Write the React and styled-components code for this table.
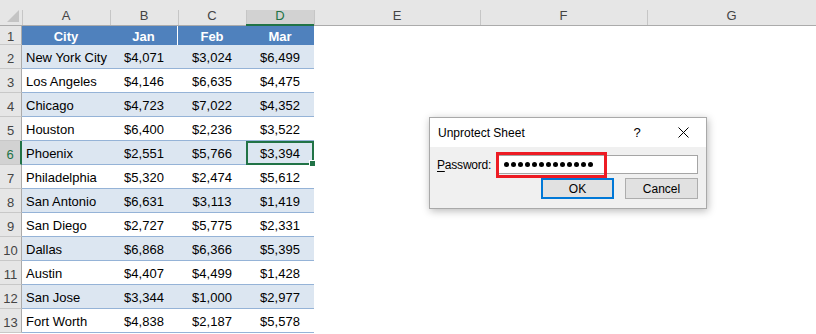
import React from 'react'
import styled, { createGlobalStyle, css } from 'styled-components'

const GlobalStyle = createGlobalStyle`
  html, body {
    margin: 0;
    padding: 0;
    background: #ffffff;
  }

  body {
    font-family: "Liberation Sans", Arial, sans-serif;
  }
`

const Page = styled.div`
  position: relative;
  width: 816px;
  height: 334px;
  overflow: hidden;
`

const Sheet = styled.div`
  display: grid;
  grid-template-columns: 22px 88px 68px 68px 68px 166px 167px 169px;
  grid-template-rows: 26px 19px repeat(12, 24px);
`

const Corner = styled.div`
  position: relative;
  background: #e6e6e6;
  border-bottom: 1px solid #ababab;
  box-sizing: border-box;

  &::after {
    content: '';
    position: absolute;
    right: 3px;
    bottom: 3px;
    width: 0;
    height: 0;
    border-left: 12px solid transparent;
    border-bottom: 12px solid #c4c4c4;
  }
`

const ColHead = styled.div`
  position: relative;
  display: flex;
  align-items: flex-end;
  justify-content: center;
  padding-bottom: 1px;
  box-sizing: border-box;

  font-size: 13px;
  line-height: 16px;
  color: #444444;

  background: #e6e6e6;
  border-bottom: 1px solid #ababab;

  &::before {
    content: '';
    position: absolute;
    left: 0;
    top: 10px;
    bottom: 0;
    width: 1px;
    background: #c6c6c6;
  }

  ${({ $active }) => $active && css`
    background: #d2d2d2;
    color: #217346;
    border-bottom: 2px solid #217346;
    padding-bottom: 0;

    &::after {
      content: '';
      position: absolute;
      left: 0;
      right: 0;
      top: 0;
      height: 10px;
      background: #e6e6e6;
    }
  `}
`

const RowHead = styled.div`
  display: flex;
  align-items: center;
  justify-content: center;
  padding-top: 3px;
  box-sizing: border-box;

  font-size: 13px;
  color: #444444;

  background: #e6e6e6;
  border-right: 1px solid #ababab;
  border-bottom: 1px solid #c8c8c8;

  ${({ $active }) => $active && css`
    background: #d2d2d2;
    color: #217346;
    border-right: 2px solid #217346;
  `}
`

const Cell = styled.div`
  position: relative;
  display: flex;
  align-items: center;
  justify-content: ${({ $left }) => ($left ? 'flex-start' : 'center')};
  padding: 2px 4px 0;
  box-sizing: border-box;

  font-size: 13px;
  color: #000000;
  white-space: nowrap;

  background: ${({ $band }) => ($band ? '#dce6f1' : '#ffffff')};
  border-bottom: 1px solid #95b3d7;

  ${({ $selected }) => $selected && css`
    border: 2px solid #217346;
    padding-top: 1px;

    &::after {
      content: '';
      position: absolute;
      right: -4px;
      bottom: -4px;
      width: 5px;
      height: 5px;
      background: #217346;
      border: 1px solid #ffffff;
      z-index: 2;
    }
  `}
`

const HeadCell = styled.div`
  display: flex;
  align-items: center;
  justify-content: center;
  padding-top: 1px;
  box-sizing: border-box;

  font-size: 13px;
  font-weight: 700;
  color: #ffffff;

  background: #4f81bd;
  border-right: ${({ $divider }) => ($divider ? '1px solid #ffffff' : 'none')};
`

const Blank = styled.div`
  background: #ffffff;
`

/* Unprotect dialog */

const Dialog = styled.div`
  position: absolute;
  left: 429px;
  top: 117px;
  width: 278px;
  height: 92px;
  box-sizing: border-box;

  display: flex;
  flex-direction: column;

  font-family: "Liberation Sans", Arial, sans-serif;
  font-size: 12px;
  color: #000000;

  background: #f0f0f0;
  border: 1px solid #a9a9a9;
  box-shadow: 1px 2px 8px rgba(0, 0, 0, 0.28);
`

const TitleBar = styled.div`
  display: flex;
  align-items: center;
  height: 29px;
  padding: 0 0 0 8px;
  background: #ffffff;
`

const Title = styled.span`
  flex: 1;
  padding-top: 1px;
`

const TitleButton = styled.span`
  display: flex;
  align-items: center;
  justify-content: center;
  width: 46px;
  height: 29px;
  font-size: 13px;
`

const Body = styled.div`
  display: flex;
  flex-direction: column;
  gap: 4px;
  padding: 8px 8px 0 7px;
`

const FieldRow = styled.div`
  display: flex;
  align-items: center;
  gap: 7px;
`

const Label = styled.span`
  width: 53px;
  letter-spacing: -0.2px;
  u {
    text-decoration: underline;
    text-underline-offset: 2px;
  }
`

const InputWrap = styled.div`
  position: relative;
  flex: 1;
  height: 19px;
  box-sizing: border-box;
  display: flex;
  align-items: center;
  gap: 2px;
  padding-left: 6px;

  background: #ffffff;
  border: 1px solid #a5a5a5;
`

const Dot = styled.span`
  width: 5px;
  height: 5px;
  border-radius: 50%;
  background: #000000;
`

const Highlight = styled.span`
  position: absolute;
  left: -2px;
  top: -4px;
  width: 111px;
  height: 26px;
  box-sizing: border-box;
  border: 3px solid #ed1c24;
`

const Buttons = styled.div`
  display: flex;
  justify-content: flex-end;
  gap: 11px;
`

const Button = styled.button`
  width: 73px;
  height: 21px;
  padding: 0;
  box-sizing: border-box;

  font-family: inherit;
  font-size: 12px;
  color: #000000;

  background: #e1e1e1;
  border: ${({ $primary }) => ($primary ? '2px solid #0078d7' : '1px solid #adadad')};
`

const columns = ['A', 'B', 'C', 'D', 'E', 'F', 'G']

const rows = [
  ['New York City', '$4,071', '$3,024', '$6,499'],
  ['Los Angeles', '$4,146', '$6,635', '$4,475'],
  ['Chicago', '$4,723', '$7,022', '$4,352'],
  ['Houston', '$6,400', '$2,236', '$3,522'],
  ['Phoenix', '$2,551', '$5,766', '$3,394'],
  ['Philadelphia', '$5,320', '$2,474', '$5,612'],
  ['San Antonio', '$6,631', '$3,113', '$1,419'],
  ['San Diego', '$2,727', '$5,775', '$2,331'],
  ['Dallas', '$6,868', '$6,366', '$5,395'],
  ['Austin', '$4,407', '$4,499', '$1,428'],
  ['San Jose', '$3,344', '$1,000', '$2,977'],
  ['Fort Worth', '$4,838', '$2,187', '$5,578']
]

function CloseIcon () {
  return (
    <svg width='11' height='11' viewBox='0 0 11 11'>
      <path d='M0.5 0.5 L10.5 10.5 M10.5 0.5 L0.5 10.5' stroke='#000' strokeWidth='1' />
    </svg>
  )
}

function UnprotectDialog () {
  return (
    <Dialog>
      <TitleBar>
        <Title>Unprotect Sheet</Title>
        <TitleButton>?</TitleButton>
        <TitleButton><CloseIcon /></TitleButton>
      </TitleBar>
      <Body>
        <FieldRow>
          <Label><u>P</u>assword:</Label>
          <InputWrap>
            {Array.from({ length: 13 }, (_, i) => <Dot key={i} />)}
            <Highlight />
          </InputWrap>
        </FieldRow>
        <Buttons>
          <Button $primary>OK</Button>
          <Button>Cancel</Button>
        </Buttons>
      </Body>
    </Dialog>
  )
}

export default function App () {
  return (
    <Page>
      <GlobalStyle />
      <Sheet>
        <Corner />
        {columns.map((c) => (
          <ColHead key={c} $active={c === 'D'}>{c}</ColHead>
        ))}

        <RowHead>1</RowHead>
        <HeadCell>City</HeadCell>
        <HeadCell $divider>Jan</HeadCell>
        <HeadCell>Feb</HeadCell>
        <HeadCell>Mar</HeadCell>
        <Blank />
        <Blank />
        <Blank />

        {rows.map((row, i) => {
          const band = i % 2 === 0
          const num = i + 2
          return (
            <React.Fragment key={num}>
              <RowHead $active={num === 6}>{num}</RowHead>
              <Cell $band={band} $left>{row[0]}</Cell>
              <Cell $band={band}>{row[1]}</Cell>
              <Cell $band={band}>{row[2]}</Cell>
              <Cell $band={band} $selected={num === 6}>{row[3]}</Cell>
              <Blank />
              <Blank />
              <Blank />
            </React.Fragment>
          )
        })}
      </Sheet>
      <UnprotectDialog />
    </Page>
  )
}
